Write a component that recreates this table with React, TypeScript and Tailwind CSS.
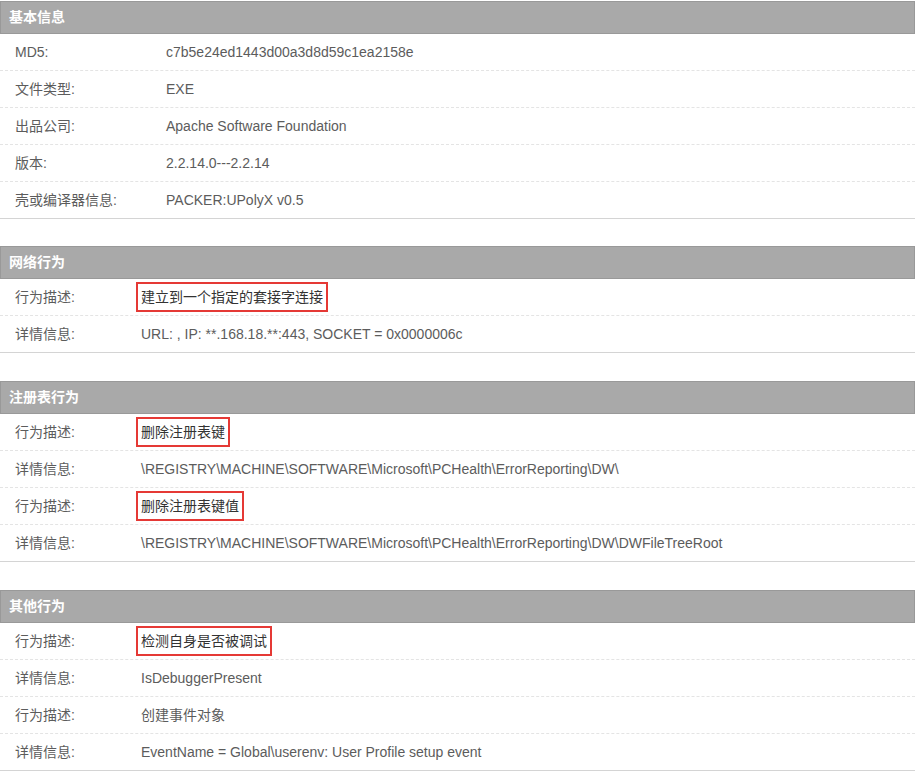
type Row = { label: string; value: string; mark?: boolean }

type Section = { title: string; labelWidth: string; gap: string; rows: Row[] }

const sections: Section[] = [
  {
    title: '基本信息',
    labelWidth: 'w-[166px]',
    gap: 'mt-px',
    rows: [
      { label: 'MD5:', value: 'c7b5e24ed1443d00a3d8d59c1ea2158e' },
      { label: '文件类型:', value: 'EXE' },
      { label: '出品公司:', value: 'Apache Software Foundation' },
      { label: '版本:', value: '2.2.14.0---2.2.14' },
      { label: '壳或编译器信息:', value: 'PACKER:UPolyX v0.5' },
    ],
  },
  {
    title: '网络行为',
    labelWidth: 'w-[141px]',
    gap: 'mt-[27px]',
    rows: [
      { label: '行为描述:', value: '建立到一个指定的套接字连接', mark: true },
      { label: '详情信息:', value: 'URL: , IP: **.168.18.**:443, SOCKET = 0x0000006c' },
    ],
  },
  {
    title: '注册表行为',
    labelWidth: 'w-[141px]',
    gap: 'mt-[28px]',
    rows: [
      { label: '行为描述:', value: '删除注册表键', mark: true },
      { label: '详情信息:', value: '\\REGISTRY\\MACHINE\\SOFTWARE\\Microsoft\\PCHealth\\ErrorReporting\\DW\\' },
      { label: '行为描述:', value: '删除注册表键值', mark: true },
      { label: '详情信息:', value: '\\REGISTRY\\MACHINE\\SOFTWARE\\Microsoft\\PCHealth\\ErrorReporting\\DW\\DWFileTreeRoot' },
    ],
  },
  {
    title: '其他行为',
    labelWidth: 'w-[141px]',
    gap: 'mt-[28px]',
    rows: [
      { label: '行为描述:', value: '检测自身是否被调试', mark: true },
      { label: '详情信息:', value: 'IsDebuggerPresent' },
      { label: '行为描述:', value: '创建事件对象' },
      { label: '详情信息:', value: 'EventName = Global\\userenv: User Profile setup event' },
    ],
  },
]

function InfoSection({ section }: { section: Section }) {
  return (
    <div className={section.gap}>
      <div className="flex h-[33px] items-center border border-[#999] bg-[#a9a9a9] pl-[8px] text-[14px] font-bold text-white">
        {section.title}
      </div>
      {section.rows.map((row, i) => (
        <div
          key={i}
          className={
            'flex h-[37px] items-center text-[14px] text-[#5c5c5c] ' +
            (i === section.rows.length - 1
              ? 'border-b border-[#d4d4d4]'
              : 'border-b border-dashed border-[#e4e4e4]')
          }
        >
          <div className={'shrink-0 pl-[15px] ' + section.labelWidth}>{row.label}</div>
          {row.mark ? (
            <span className="leading-[20px] text-[#333] outline-2 outline-[#e53935] outline-offset-[3px] outline-solid">
              {row.value}
            </span>
          ) : (
            <div className="leading-[20px]">{row.value}</div>
          )}
        </div>
      ))}
    </div>
  )
}

export default function App() {
  return (
    <div
      className="h-[772px] w-[916px] overflow-hidden bg-white pr-px"
      style={{ fontFamily: '"Liberation Sans", "Noto Sans CJK SC", sans-serif' }}
    >
      {sections.map((s) => (
        <InfoSection key={s.title} section={s} />
      ))}
    </div>
  )
}
